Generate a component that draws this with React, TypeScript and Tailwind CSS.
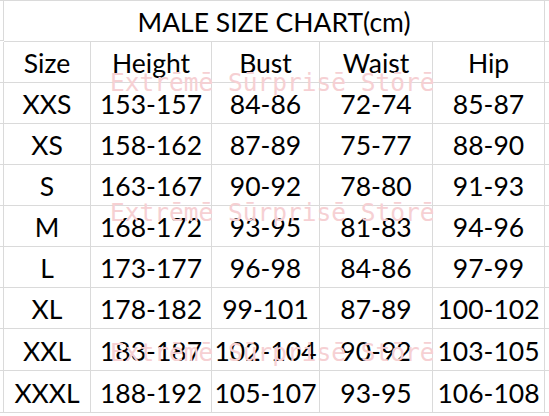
import React from "react";

const rows: string[][] = [
  ["XXS", "153-157", "84-86", "72-74", "85-87"],
  ["XS", "158-162", "87-89", "75-77", "88-90"],
  ["S", "163-167", "90-92", "78-80", "91-93"],
  ["M", "168-172", "93-95", "81-83", "94-96"],
  ["L", "173-177", "96-98", "84-86", "97-99"],
  ["XL", "178-182", "99-101", "87-89", "100-102"],
  ["XXL", "183-187", "102-104", "90-92", "103-105"],
  ["XXXL", "188-192", "105-107", "93-95", "106-108"],
];

const heights = ["h-[41px]", "h-[41px]", "h-[41px]", "h-[41px]", "h-[41px]", "h-[41px]", "h-[42px]", "h-[42px]"];

export default function App() {
  return (
    <div
      className="relative w-[549px] h-[416px] overflow-hidden bg-white"
      style={{ fontFamily: "Lato, 'Open Sans', sans-serif" }}
    >
      <div className="grid grid-cols-[4px_87px_121px_108px_113px_112px_1fr] border-t border-[#dadada]">
        <div className="h-[40px] border-r border-b border-[#dadada]" />
        <div className="col-span-5 h-[41px] border-r border-b border-[#dadada] flex items-center justify-center pt-[3px] text-[26.5px] text-black leading-none">
          MALE SIZE CHART(cm)
        </div>
        <div className="border-b border-[#dadada]" />
        <div className="h-[41px] border-r border-b border-[#dadada]" />
        {["Size", "Height", "Bust", "Waist", "Hip"].map((v, i) => (
          <div
            key={i}
            className="border-r border-b border-[#dadada] flex items-center justify-center pt-[3px] text-[26.5px] text-black leading-none"
          >
            {v}
          </div>
        ))}
        <div className="border-b border-[#dadada]" />
        {rows.map((r, i) => (
          <React.Fragment key={i}>
            <div className={`${heights[i]} border-r border-b border-[#dadada]`} />
            {r.map((v, j) => (
              <div
                key={j}
                className="border-r border-b border-[#dadada] flex items-center justify-center pt-[3px] text-[26.5px] text-black leading-none"
              >
                {v}
              </div>
            ))}
            <div className="border-b border-[#dadada]" />
          </React.Fragment>
        ))}
      </div>
      {[71, 201, 341].map((t) => (
        <div
          key={t}
          aria-hidden="true"
          className="absolute left-[110px] text-[24.5px] leading-none text-[#f6d0d3] whitespace-nowrap pointer-events-none"
          style={{ top: t, fontFamily: "'DejaVu Sans Mono', monospace" }}
        >
          Extrēmē Sūrprisē Stōrē
        </div>
      ))}
    </div>
  );
}
